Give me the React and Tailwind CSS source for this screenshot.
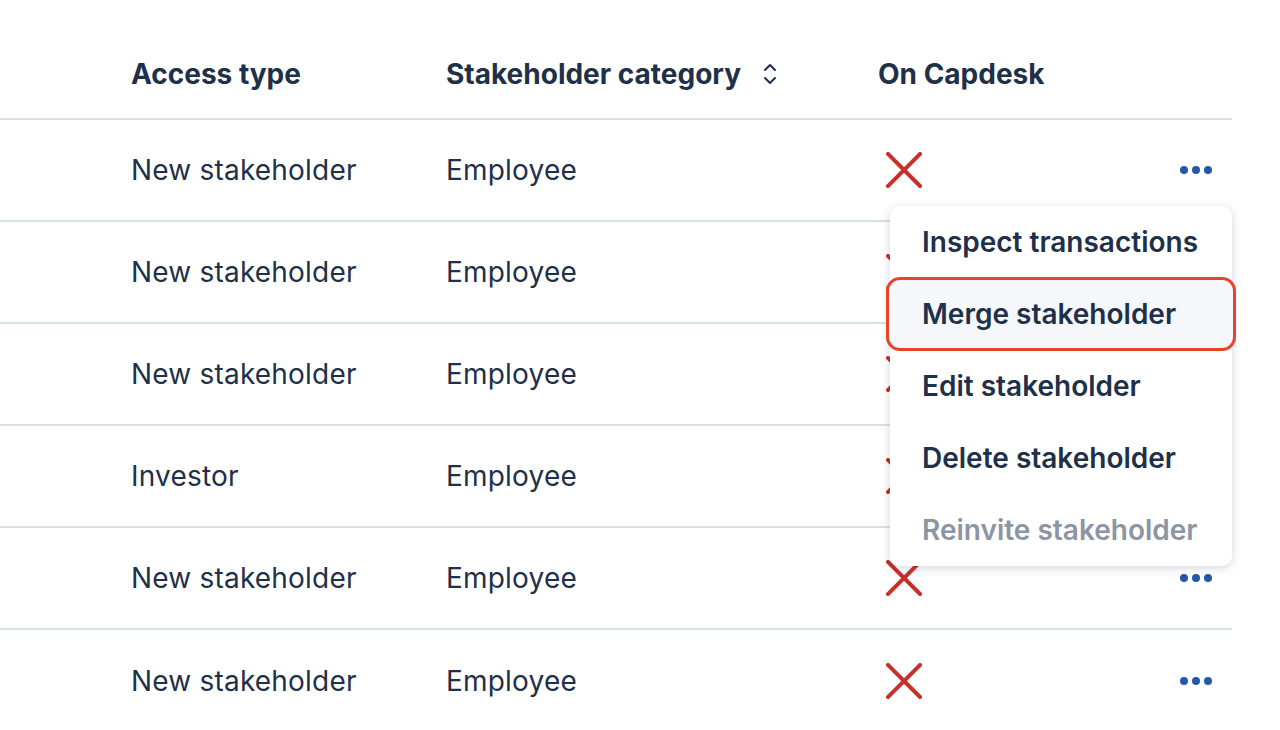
import React from 'react';

const rows = [
  'New stakeholder',
  'New stakeholder',
  'New stakeholder',
  'Investor',
  'New stakeholder',
  'New stakeholder',
];

const menuItems = [
  { label: 'Inspect transactions' },
  { label: 'Merge stakeholder', active: true },
  { label: 'Edit stakeholder' },
  { label: 'Delete stakeholder' },
  { label: 'Reinvite stakeholder', disabled: true },
];

function Cross() {
  return (
    <svg width="36" height="36" viewBox="0 0 36 36" className="block">
      <path d="M2 2 L34 34 M34 2 L2 34" stroke="#c8312b" strokeWidth="4" strokeLinecap="square" />
    </svg>
  );
}

function Dots() {
  return (
    <svg width="34" height="10" viewBox="0 0 34 10" className="block">
      <circle cx="5" cy="5" r="4" fill="#2458a8" />
      <circle cx="17" cy="5" r="4" fill="#2458a8" />
      <circle cx="29" cy="5" r="4" fill="#2458a8" />
    </svg>
  );
}

function SortIcon() {
  return (
    <svg width="14" height="24" viewBox="0 0 14 24" className="block">
      <path d="M2 8 L7 3 L12 8 M2 16 L7 21 L12 16" fill="none" stroke="#1f3049" strokeWidth="2" strokeLinecap="round" strokeLinejoin="round" />
    </svg>
  );
}

export default function App() {
  return (
    <div className="relative min-h-screen bg-white text-[#1f3049]" style={{ fontFamily: 'Inter, "Noto Sans", sans-serif' }}>
      <div className="w-[1232px]">
        {/* Header */}
        <div className="flex items-center h-[120px] pt-[29px] pl-[131px] border-b-2 border-[#d7dfe7] text-[28px] leading-[34px] font-bold">
          <div className="w-[315px]">Access type</div>
          <div className="w-[432px] flex items-center gap-[22px]">
            <span>Stakeholder category</span>
            <SortIcon />
          </div>
          <div className="flex-1">On Capdesk</div>
        </div>

        {/* Rows */}
        {rows.map((r, i) => (
          <div
            key={i}
            className={`flex items-center h-[102px] pl-[131px] pr-[19px] text-[28px] leading-[34px] tracking-[0.2px] ${i < rows.length - 1 ? 'border-b-2 border-[#d7dfe7]' : ''}`}
          >
            <div className="w-[315px]">{r}</div>
            <div className="w-[440px]">Employee</div>
            <div className="flex-1">
              <Cross />
            </div>
            <Dots />
          </div>
        ))}
      </div>

      {/* Dropdown menu */}
      <div className="absolute left-[890px] top-[206px] w-[342px] h-[360px] bg-white rounded-[10px] shadow-[0_2px_10px_rgba(15,30,60,0.18)]">
        {menuItems.map((m) => (
          <div
            key={m.label}
            className={
              m.active
                ? 'flex items-center h-[74px] -my-[1px] -mx-[4px] pl-[33px] border-[3px] border-[#e8432b] rounded-[14px] bg-[#f6f7fb] text-[28px] leading-[34px] font-semibold'
                : `flex items-center h-[72px] pl-[32px] text-[28px] leading-[34px] font-semibold ${m.disabled ? 'text-[#8b95a3]' : ''}`
            }
          >
            {m.label}
          </div>
        ))}
      </div>
    </div>
  );
}
